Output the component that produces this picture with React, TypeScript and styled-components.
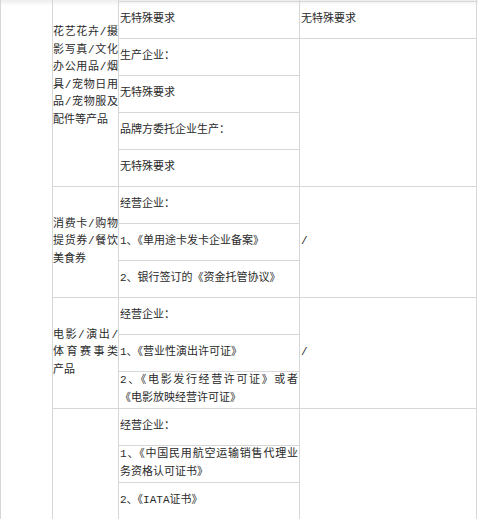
import React from "react";
import styled, { createGlobalStyle } from "styled-components";

const Global = createGlobalStyle`
  html, body {
    margin: 0;
    padding: 0;
    background: #fff;
    overflow: hidden;
  }
  body {
    font-family: "Liberation Mono", "Noto Sans CJK SC", monospace;
  }
`;

const LINE = "#d7d7d7";

const Page = styled.div`
  width: 478px;
  height: 519px;
  overflow: hidden;
  background: linear-gradient(to bottom, #ededed 0px, #ffffff 6px);
`;

const Table = styled.table`
  width: 477px;
  table-layout: fixed;
  border-collapse: separate;
  border-spacing: 0;
  font-family: "Liberation Mono", "Noto Sans CJK SC", monospace;
  font-size: 11px;
  line-height: 17.6px;
  color: #2a2a2a;
`;

const Col = styled.col<{ $w: number }>`
  width: ${(p) => p.$w}px;
`;

const Row = styled.tr<{ $h?: number }>`
  height: ${(p) => p.$h ?? 37}px;
`;

const BaseCell = styled.td`
  border-right: 1px solid ${LINE};
  border-bottom: 1px solid ${LINE};
  vertical-align: middle;
  text-align: justify;
  overflow: hidden;
  word-break: normal;
`;

const Side = styled(BaseCell)`
  border-left: 1px solid ${LINE};
  border-bottom: none;
  padding: 0;
`;

const Category = styled(BaseCell)<{ $padTop?: number }>`
  padding: ${(p) => (p.$padTop ? `${p.$padTop}px 0 0 0` : "0")};
  vertical-align: ${(p) => (p.$padTop ? "top" : "middle")};
`;

const Req = styled(BaseCell)`
  padding: 0 1px;
`;

const Note = styled(BaseCell)`
  padding: 0 1px;
`;

const Line = styled.span<{ $last?: boolean }>`
  display: block;
  text-align: justify;
  text-align-last: ${(p) => (p.$last ? "left" : "justify")};
`;

const Lines: React.FC<{ lines: string[] }> = ({ lines }) => (
  <>
    {lines.map((l, i) => (
      <Line key={i} $last={i === lines.length - 1}>
        {l}
      </Line>
    ))}
  </>
);

export default function App() {
  return (
    <>
      <Global />
      <Page>
        <Table>
          <colgroup>
            <Col $w={53} />
            <Col $w={66} />
            <Col $w={181} />
            <Col $w={177} />
          </colgroup>
          <tbody>
            <Row $h={2}>
              <Side rowSpan={15} />
              <Category rowSpan={6} $padTop={24}>
                <Lines
                  lines={[
                    "花艺花卉/摄",
                    "影写真/文化",
                    "办公用品/烟",
                    "具/宠物日用",
                    "品/宠物服及",
                    "配件等产品",
                  ]}
                />
              </Category>
              <Req />
              <Note />
            </Row>
            <Row>
              <Req>无特殊要求</Req>
              <Note>无特殊要求</Note>
            </Row>
            <Row>
              <Req>生产企业：</Req>
              <Note rowSpan={4} />
            </Row>
            <Row>
              <Req>无特殊要求</Req>
            </Row>
            <Row>
              <Req>品牌方委托企业生产：</Req>
            </Row>
            <Row>
              <Req>无特殊要求</Req>
            </Row>

            <Row>
              <Category rowSpan={3}>
                <Lines lines={["消费卡/购物", "提货券/餐饮", "美食券"]} />
              </Category>
              <Req>经营企业：</Req>
              <Note rowSpan={3}>/</Note>
            </Row>
            <Row>
              <Req>1、《单用途卡发卡企业备案》</Req>
            </Row>
            <Row>
              <Req>2、银行签订的《资金托管协议》</Req>
            </Row>

            <Row>
              <Category rowSpan={3}>
                <Lines lines={["电影/演出/", "体育赛事类", "产品"]} />
              </Category>
              <Req>经营企业：</Req>
              <Note rowSpan={3}>/</Note>
            </Row>
            <Row>
              <Req>1、《营业性演出许可证》</Req>
            </Row>
            <Row>
              <Req>
                <Lines lines={["2、《电影发行经营许可证》或者", "《电影放映经营许可证》"]} />
              </Req>
            </Row>

            <Row>
              <Category rowSpan={3} />
              <Req>经营企业：</Req>
              <Note rowSpan={3} />
            </Row>
            <Row>
              <Req>
                <Lines lines={["1、《中国民用航空运输销售代理业", "务资格认可证书》"]} />
              </Req>
            </Row>
            <Row>
              <Req>2、《IATA证书》</Req>
            </Row>
          </tbody>
        </Table>
      </Page>
    </>
  );
}
